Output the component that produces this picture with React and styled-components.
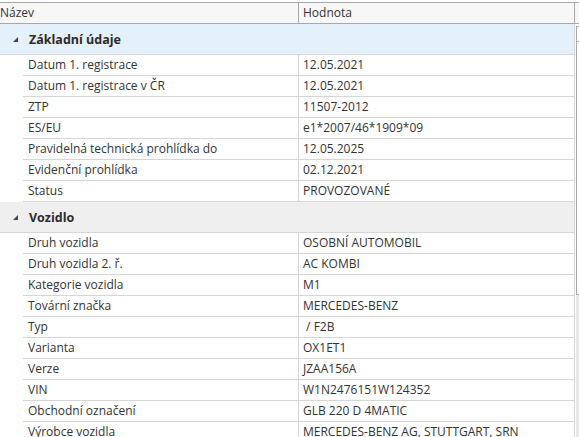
import React from "react";
import styled, { createGlobalStyle } from "styled-components";

const GlobalStyle = createGlobalStyle`
  html, body {
    margin: 0;
    padding: 0;
    background: #fff;
  }
  body {
    font-family: "Open Sans", "Noto Sans", sans-serif;
    font-size: 12px;
    color: #333;
  }
`;

const Page = styled.div`
  width: 579px;
  height: 437px;
  overflow: hidden;
  padding-top: 2px;
  box-sizing: border-box;
`;

const HeaderRow = styled.div`
  display: flex;
  height: 20px;
  border-top: 1px solid #a8a8a8;
  border-bottom: 1px solid #a8a8a8;
  background: #f7f7f7;
`;

const HeaderCell = styled.div`
  flex: 0 0 ${(p) => p.width}px;
  box-sizing: border-box;
  border-right: 1px solid #a8a8a8;
  padding-left: ${(p) => p.pad}px;
  line-height: 20px;
  white-space: nowrap;
  overflow: hidden;
`;

const Body = styled.div`
  display: flex;
`;

const Table = styled.div`
  flex: 0 0 575px;
  border-right: 1px solid #d6d6d6;
  box-sizing: border-box;
`;

const GroupRow = styled.div`
  display: flex;
  align-items: center;
  height: 30px;
  border-bottom: 1px solid #d6d6d6;
  background: ${(p) => p.bg};
  font-weight: 700;
  font-size: 12.5px;
  color: #2b2b2b;
`;

const Toggle = styled.span`
  width: 0;
  height: 0;
  margin-left: 13px;
  margin-right: 11px;
  border-style: solid;
  border-width: 0 0 5px 5px;
  border-color: transparent transparent #444 transparent;
`;

const Row = styled.div`
  display: flex;
  height: 21px;
  padding-left: 23px;
`;

const Cell = styled.div`
  box-sizing: border-box;
  height: 21px;
  line-height: 20px;
  border-bottom: 1px solid #d6d6d6;
  white-space: pre;
  overflow: hidden;
  ${(p) =>
    p.$label
      ? `flex: 0 0 276px; padding-left: 5px; border-right: 1px solid #d6d6d6;`
      : `flex: 1; padding-left: 4px;`}
`;

const Scrollbar = styled.div`
  flex: 0 0 17px;
  display: flex;
  flex-direction: column;
  margin-top: 2px;
  margin-left: 1px;
  height: 420px;
`;

const ScrollButton = styled.div`
  height: 14px;
  border: 1px solid #a8a8a8;
  border-bottom: none;
`;

const Thumb = styled.div`
  height: 252px;
  border: 1px solid #a8a8a8;
  background: #fff;
`;

const Track = styled.div`
  flex: 1;
  background: #e8e8e8;
`;

const groups = [
  {
    title: "Základní údaje",
    bg: "#e5f1fa",
    rows: [
      ["Datum 1. registrace", "12.05.2021"],
      ["Datum 1. registrace v ČR", "12.05.2021"],
      ["ZTP", "11507-2012"],
      ["ES/EU", "e1*2007/46*1909*09"],
      ["Pravidelná technická prohlídka do", "12.05.2025"],
      ["Evidenční prohlídka", "02.12.2021"],
      ["Status", "PROVOZOVANÉ"],
    ],
  },
  {
    title: "Vozidlo",
    bg: "#efefef",
    rows: [
      ["Druh vozidla", "OSOBNÍ AUTOMOBIL"],
      ["Druh vozidla 2. ř.", "AC KOMBI"],
      ["Kategorie vozidla", "M1"],
      ["Tovární značka", "MERCEDES-BENZ"],
      ["Typ", " / F2B"],
      ["Varianta", "OX1ET1"],
      ["Verze", "JZAA156A"],
      ["VIN", "W1N2476151W124352"],
      ["Obchodní označení", "GLB 220 D 4MATIC"],
      ["Výrobce vozidla", "MERCEDES-BENZ AG, STUTTGART, SRN"],
    ],
  },
];

const App = () => {
  return (
    <Page>
      <GlobalStyle />
      <HeaderRow>
        <HeaderCell width={299} pad={0}>
          Název
        </HeaderCell>
        <HeaderCell width={276} pad={4}>
          Hodnota
        </HeaderCell>
      </HeaderRow>
      <Body>
        <Table>
          {groups.map((g) => (
            <React.Fragment key={g.title}>
              <GroupRow bg={g.bg}>
                <Toggle />
                {g.title}
              </GroupRow>
              {g.rows.map(([label, value]) => (
                <Row key={label}>
                  <Cell $label>{label}</Cell>
                  <Cell>{value}</Cell>
                </Row>
              ))}
            </React.Fragment>
          ))}
        </Table>
        <Scrollbar>
          <ScrollButton />
          <Thumb />
          <Track />
        </Scrollbar>
      </Body>
    </Page>
  );
};

export default App;
